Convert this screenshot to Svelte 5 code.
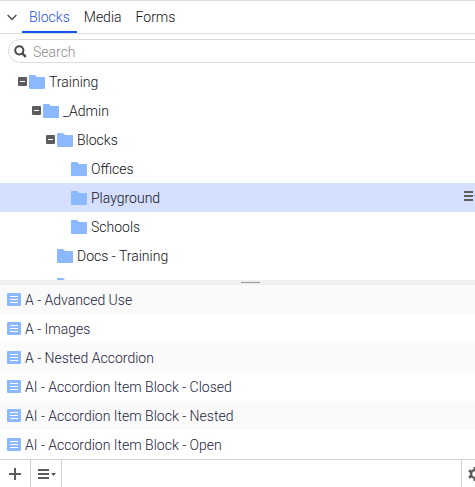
<script lang="ts">
  interface TreeItem {
    name: string;
    depth: number;
    open?: boolean;
  }

  const tabs = ['Blocks', 'Media', 'Forms'];

  const folders: TreeItem[] = [
    { name: 'Training', depth: 0, open: true },
    { name: '_Admin', depth: 1, open: true },
    { name: 'Blocks', depth: 2, open: true },
    { name: 'Offices', depth: 3 },
    { name: 'Playground', depth: 3 },
    { name: 'Schools', depth: 3 },
    { name: 'Docs - Training', depth: 2 },
    { name: '', depth: 2 }
  ];

  const blocks = [
    'A - Advanced Use',
    'A - Images',
    'A - Nested Accordion',
    'AI - Accordion Item Block - Closed',
    'AI - Accordion Item Block - Nested',
    'AI - Accordion Item Block - Open'
  ];

  let activeTab = $state('Blocks');
  let selected = $state(4);
  let query = $state('');
</script>

<div class="viewport">
  <div class="pane">
    <div class="tabs" role="tablist">
      <button class="collapse" type="button" aria-label="Collapse">
        <svg width="10" height="7" viewBox="0 0 10 7"><path d="M.6 1 5 5.4 9.4 1" fill="none" stroke="#555" stroke-width="1.5" /></svg>
      </button>
      {#each tabs as tab}
        <button
          class="tab"
          class:active={activeTab === tab}
          type="button"
          role="tab"
          aria-selected={activeTab === tab}
          onclick={() => (activeTab = tab)}
        >{tab}</button>
      {/each}
    </div>

    <label class="search">
      <svg width="13" height="13" viewBox="0 0 13 13" aria-hidden="true">
        <circle cx="5.3" cy="5.3" r="4.1" fill="none" stroke="#4a4a4a" stroke-width="2" />
        <path d="m8.3 8.3 3.5 3.6" stroke="#4a4a4a" stroke-width="2.4" />
      </svg>
      <input type="text" placeholder="Search" aria-label="Search" bind:value={query} />
    </label>

    <div class="tree" role="tree">
      {#each folders as folder, i}
        <div class="node" class:selected={selected === i} role="treeitem" aria-selected={selected === i}>
          <span class="indent" style:width="{folder.depth * 14}px"></span>
          <span class="toggle">
            {#if folder.open}
              <svg width="9" height="9" viewBox="0 0 9 9"><rect width="9" height="9" rx="1" fill="#5c5c5c" /><path d="M2 4.5h5" stroke="#fff" /></svg>
            {/if}
          </span>
          <button class="name" type="button" aria-label={folder.name || 'Folder'} onclick={() => (selected = i)}>
            <svg width="16" height="14" viewBox="0 0 16 14"><path d="M0 1q0-1 1-1h5l2 2h7q1 0 1 1v10q0 1-1 1H1q-1 0-1-1z" fill="#8bb8ff" /></svg>
            <span>{folder.name}</span>
          </button>
          {#if selected === i}
            <button class="context" type="button" aria-label="Folder menu">
              <svg width="16" height="10" viewBox="0 0 16 10"><path d="M0 0h9v2H0zM0 4h9v2H0zM0 8h9v2H0zM10 4h5l-2.500 3z" fill="#5c5c5c" /></svg>
            </button>
          {/if}
        </div>
      {/each}
    </div>

    <div class="splitter"><span></span></div>

    <ul class="list">
      {#each blocks as block}
        <li>
          <svg width="14" height="13" viewBox="0 0 14 13" aria-hidden="true"><rect width="14" height="13" rx="1" fill="#8bb8ff" /><path d="M3 3.500h8M3 6.500h8M3 9.500h8" stroke="#fff" /></svg>
          <span>{block}</span>
        </li>
      {/each}
    </ul>

    <div class="toolbar">
      <button class="add" type="button" aria-label="Create new">
        <svg width="12" height="12" viewBox="0 0 12 12"><path d="M5 0h2v5h5v2H7v5H5V7H0V5h5z" fill="#5c5c5c" /></svg>
      </button>
      <button class="menu" type="button" aria-label="Options">
        <svg width="18" height="10" viewBox="0 0 18 10"><path d="M0 0h11v2H0zM0 4h11v2H0zM0 8h11v2H0zM13 4h5l-2.500 3z" fill="#5c5c5c" /></svg>
      </button>
      <button class="settings" type="button" aria-label="Settings">
        <svg width="14" height="14" viewBox="0 0 14 14">
          <circle cx="7" cy="7" r="3.900" fill="none" stroke="#5c5c5c" stroke-width="2.400" />
          <path d="M7 0v3M7 11v3M1 3.500 3.500 5M10.500 9l2.500 1.500M1 10.500 3.500 9M10.500 5l2.500-1.500" stroke="#5c5c5c" stroke-width="3" />
        </svg>
      </button>
    </div>
  </div>
</div>

<style>
  :global(body) {
    margin: 0;
    background: #fff;
  }

  .viewport {
    height: 100vh;
    overflow: hidden;
    font-family: Roboto, "Liberation Sans", sans-serif;
    font-size: 14px;
    font-weight: 300;
    color: #101018;
  }

  /* the pane runs on under the edge of the window */
  .pane {
    box-sizing: border-box;
    width: calc(100% + 26px);
    height: 100%;
    display: flex;
    flex-direction: column;
    border-top: 1px solid #dcdcdc;
  }

  button {
    margin: 0;
    padding: 0;
    border: 0;
    background: none;
    font: inherit;
    color: inherit;
    cursor: pointer;
  }

  svg {
    display: block;
    flex: none;
  }

  .tabs {
    flex: none;
    display: flex;
    height: 32px;
    border-bottom: 1px solid #dcdcdc;
  }

  .collapse {
    width: 22px;
    padding-left: 7px;
  }

  .tab {
    padding: 2px 7px 0;
    border-bottom: 2px solid transparent;
  }

  .tab.active {
    color: #1f4fe6;
    border-bottom-color: #1456f1;
  }

  .search {
    flex: none;
    display: flex;
    align-items: center;
    gap: 6px;
    height: 22px;
    margin: 5px 8px 4px;
    padding-left: 5px;
    border: 1px solid #dcdcdc;
    border-radius: 12px;
  }

  .search input {
    flex: 1;
    min-width: 0;
    padding: 2px 0 0;
    border: 0;
    outline: 0;
    background: none;
    font: inherit;
    color: inherit;
  }

  .search input::placeholder {
    color: #8c8c8c;
    opacity: 1;
  }

  .tree {
    flex: 1;
    min-height: 0;
    overflow: hidden;
  }

  .node {
    box-sizing: border-box;
    display: flex;
    align-items: center;
    height: 29px;
    padding: 0 21px 0 18px;
  }

  .node.selected {
    background: #d5dfff;
  }

  .indent {
    flex: none;
  }

  .toggle {
    flex: none;
    width: 11px;
  }

  .name {
    flex: 1;
    display: flex;
    align-items: center;
    gap: 4px;
    text-align: left;
  }

  .context {
    width: 16px;
    padding-bottom: 3px;
  }

  .splitter {
    flex: none;
    height: 3px;
    padding-top: 2px;
    background: #efeff1;
  }

  .splitter span {
    display: block;
    width: 19px;
    height: 1px;
    margin: 0 auto;
    background: #999;
  }

  .list {
    flex: none;
    margin: 0;
    padding: 0;
    list-style: none;
    color: #1c1c40;
  }

  .list li {
    display: flex;
    align-items: center;
    gap: 4px;
    height: 29px;
    padding-left: 7px;
  }

  .list li:nth-child(odd) {
    background: #fafafa;
  }

  .toolbar {
    flex: none;
    display: flex;
    height: 27px;
    border-top: 1px solid #ccd0d0;
  }

  .toolbar button {
    box-sizing: border-box;
    display: flex;
    align-items: center;
    width: 31px;
    border-right: 1px solid #ccd0d0;
  }

  .toolbar .add {
    padding-left: 9px;
  }

  .toolbar .menu {
    padding-left: 7px;
  }

  .toolbar .settings {
    width: 40px;
    margin-left: auto;
    padding-left: 6px;
    border-right: 0;
    border-left: 1px solid #ccd0d0;
  }
</style>
